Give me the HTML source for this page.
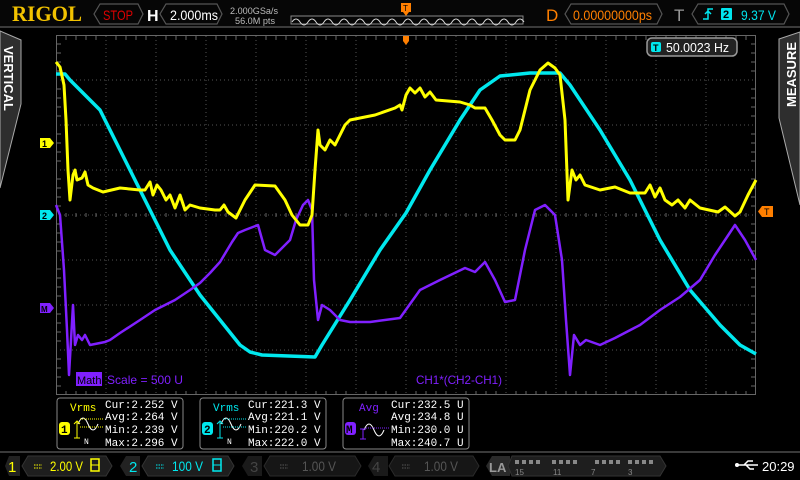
<!DOCTYPE html>
<html><head><meta charset="utf-8"><style>
body{margin:0;background:#000;width:800px;height:480px;overflow:hidden;font-family:"Liberation Sans",sans-serif}
</style></head><body>
<svg width="800" height="480" xmlns="http://www.w3.org/2000/svg" style="position:absolute;left:0;top:0">
<rect width="800" height="480" fill="#000"/>
<!-- header -->
<rect x="0" y="0" width="800" height="26" fill="#060606"/>
<line x1="0" y1="27" x2="800" y2="27" stroke="#3a3a3a" stroke-width="2"/>
<text x="12" y="21" font-family="Liberation Serif" font-weight="bold" font-size="22" fill="#f2c200" textLength="70" lengthAdjust="spacingAndGlyphs">RIGOL</text>
<path d="M100,4 H138 L143,14 L138,24 H100 L94,14 Z" fill="none" stroke="#555" stroke-width="1.2"/>
<text x="103" y="20" font-size="14" fill="#e00000" textLength="30" lengthAdjust="spacingAndGlyphs">STOP</text>
<text x="147" y="21" font-size="16" font-weight="bold" fill="#fff">H</text>
<path d="M166,4 H217 L222,14 L217,24 H166 L160,14 Z" fill="none" stroke="#555" stroke-width="1.2"/>
<text x="170" y="20" font-size="14" fill="#fff" textLength="48" lengthAdjust="spacingAndGlyphs">2.000ms</text>
<text x="230" y="14" font-size="9.5" fill="#bbb" textLength="48" lengthAdjust="spacingAndGlyphs">2.000GSa/s</text>
<text x="235" y="24" font-size="9.5" fill="#bbb" textLength="40" lengthAdjust="spacingAndGlyphs">56.0M pts</text>
<rect x="291" y="16" width="232" height="8" fill="none" stroke="#888"/>
<path d="M292,22 q4,-6 8,0 t8,0 t8,0 t8,0 t8,0 t8,0 t8,0 t8,0 t8,0 t8,0 t8,0 t8,0 t8,0 t8,0 t8,0 t8,0 t8,0 t8,0 t8,0 t8,0 t8,0 t8,0 t8,0 t8,0 t8,0 t8,0 t8,0 t8,0 t8,0" fill="none" stroke="#ddd" stroke-width="1"/>
<rect x="401" y="3" width="10" height="9" fill="#ff7f00"/><path d="M403,12 L406,16 L409,12Z" fill="#ff7f00"/>
<text x="403" y="11" font-size="8" fill="#000">T</text>
<text x="546" y="21" font-size="17" fill="#ff7f00">D</text>
<path d="M571,4 H657 L662,14 L657,24 H571 L565,14 Z" fill="none" stroke="#555" stroke-width="1.2"/>
<text x="573" y="20" font-size="14" fill="#ff7f00" textLength="79" lengthAdjust="spacingAndGlyphs">0.00000000ps</text>
<text x="674" y="21" font-size="17" fill="#999">T</text>
<path d="M698,4 H784 L789,14 L784,24 H698 L692,14 Z" fill="none" stroke="#555" stroke-width="1.2"/>
<path d="M703,19 H708 V9 H713 M705,14 L708,11 L711,14" fill="none" stroke="#00e5ee" stroke-width="1.5"/>
<rect x="721" y="8" width="11" height="12" fill="#00e5ee" rx="1"/>
<text x="723" y="18" font-size="11" font-weight="bold" fill="#000">2</text>
<text x="741" y="20" font-size="14" fill="#00e5ee" textLength="35" lengthAdjust="spacingAndGlyphs">9.37 V</text>
<!-- side panels -->
<path d="M0,31 L21,40 V104 L0,188 Z" fill="#2e2e2e" stroke="#aaa" stroke-width="1"/>
<text transform="translate(4,46) rotate(90)" font-size="13" font-weight="bold" fill="#fff">VERTICAL</text>
<path d="M800,32 L779,39 V118 L800,205 Z" fill="#2e2e2e" stroke="#aaa" stroke-width="1"/>
<text transform="translate(796,107) rotate(-90)" font-size="13" font-weight="bold" fill="#fff">MEASURE</text>
<!-- grid -->
<g stroke="#555" stroke-width="1" stroke-dasharray="1,3">
<line x1="106" y1="36" x2="106" y2="395"/><line x1="156" y1="36" x2="156" y2="395"/><line x1="206" y1="36" x2="206" y2="395"/><line x1="256" y1="36" x2="256" y2="395"/><line x1="306" y1="36" x2="306" y2="395"/><line x1="356" y1="36" x2="356" y2="395"/><line x1="456" y1="36" x2="456" y2="395"/><line x1="506" y1="36" x2="506" y2="395"/><line x1="556" y1="36" x2="556" y2="395"/><line x1="606" y1="36" x2="606" y2="395"/><line x1="656" y1="36" x2="656" y2="395"/><line x1="706" y1="36" x2="706" y2="395"/>
<line x1="56" y1="80" x2="756" y2="80"/><line x1="56" y1="125" x2="756" y2="125"/><line x1="56" y1="170" x2="756" y2="170"/><line x1="56" y1="260" x2="756" y2="260"/><line x1="56" y1="305" x2="756" y2="305"/><line x1="56" y1="350" x2="756" y2="350"/>
<line x1="406" y1="36" x2="406" y2="395"/><line x1="56" y1="215" x2="756" y2="215"/>
</g>
<g stroke="#666" stroke-width="1" fill="none">
<rect x="56.5" y="35.5" width="699" height="359"/>
<path d="M56,44h5M56,53h5M56,62h5M56,71h5M56,89h5M56,98h5M56,107h5M56,116h5M56,134h5M56,143h5M56,152h5M56,161h5M56,179h5M56,188h5M56,197h5M56,206h5M56,224h5M56,233h5M56,242h5M56,251h5M56,269h5M56,278h5M56,287h5M56,296h5M56,314h5M56,323h5M56,332h5M56,341h5M56,359h5M56,368h5M56,377h5M56,386h5"/>
<path d="M756,44h-5M756,53h-5M756,62h-5M756,71h-5M756,89h-5M756,98h-5M756,107h-5M756,116h-5M756,134h-5M756,143h-5M756,152h-5M756,161h-5M756,179h-5M756,188h-5M756,197h-5M756,206h-5M756,224h-5M756,233h-5M756,242h-5M756,251h-5M756,269h-5M756,278h-5M756,287h-5M756,296h-5M756,314h-5M756,323h-5M756,332h-5M756,341h-5M756,359h-5M756,368h-5M756,377h-5M756,386h-5"/>
<path d="M66,36v4M76,36v4M86,36v4M96,36v4M116,36v4M126,36v4M136,36v4M146,36v4M166,36v4M176,36v4M186,36v4M196,36v4M216,36v4M226,36v4M236,36v4M246,36v4M266,36v4M276,36v4M286,36v4M296,36v4M316,36v4M326,36v4M336,36v4M346,36v4M366,36v4M376,36v4M386,36v4M396,36v4M416,36v4M426,36v4M436,36v4M446,36v4M466,36v4M476,36v4M486,36v4M496,36v4M516,36v4M526,36v4M536,36v4M546,36v4M566,36v4M576,36v4M586,36v4M596,36v4M616,36v4M626,36v4M636,36v4M646,36v4M666,36v4M676,36v4M686,36v4M696,36v4M716,36v4M726,36v4M736,36v4M746,36v4"/>
<path d="M66,395v-4M76,395v-4M86,395v-4M96,395v-4M116,395v-4M126,395v-4M136,395v-4M146,395v-4M166,395v-4M176,395v-4M186,395v-4M196,395v-4M216,395v-4M226,395v-4M236,395v-4M246,395v-4M266,395v-4M276,395v-4M286,395v-4M296,395v-4M316,395v-4M326,395v-4M336,395v-4M346,395v-4M366,395v-4M376,395v-4M386,395v-4M396,395v-4M416,395v-4M426,395v-4M436,395v-4M446,395v-4M466,395v-4M476,395v-4M486,395v-4M496,395v-4M516,395v-4M526,395v-4M536,395v-4M546,395v-4M566,395v-4M576,395v-4M586,395v-4M596,395v-4M616,395v-4M626,395v-4M636,395v-4M646,395v-4M666,395v-4M676,395v-4M686,395v-4M696,395v-4M716,395v-4M726,395v-4M736,395v-4M746,395v-4"/>
<path d="M66,213v4M76,213v4M86,213v4M96,213v4M116,213v4M126,213v4M136,213v4M146,213v4M166,213v4M176,213v4M186,213v4M196,213v4M216,213v4M226,213v4M236,213v4M246,213v4M266,213v4M276,213v4M286,213v4M296,213v4M316,213v4M326,213v4M336,213v4M346,213v4M366,213v4M376,213v4M386,213v4M396,213v4M416,213v4M426,213v4M436,213v4M446,213v4M466,213v4M476,213v4M486,213v4M496,213v4M516,213v4M526,213v4M536,213v4M546,213v4M566,213v4M576,213v4M586,213v4M596,213v4M616,213v4M626,213v4M636,213v4M646,213v4M666,213v4M676,213v4M686,213v4M696,213v4M716,213v4M726,213v4M736,213v4M746,213v4"/>
</g>
<!-- traces -->
<polyline fill="none" stroke="#00e8ee" stroke-width="3.5" stroke-linejoin="round" points="56,74 65,74 70,80 90,100 100,110 120,150 145,200 170,250 200,295 220,320 240,345 250,352 262,355 315,357 322,345 350,300 380,250 406,213 430,170 460,120 480,90 500,76 530,73 560,73 570,85 600,130 630,180 660,240 690,290 720,325 740,345 756,354"/>
<polyline fill="none" stroke="#8020ff" stroke-width="2.5" stroke-linejoin="round" points="56,205 60,215 64,270 67,330 69,375 71,340 73,305 75,345 78,335 82,340 85,335 90,345 105,342 110,340 120,333 140,320 155,310 175,300 190,290 200,283 210,273 220,262 232,242 238,233 245,230 258,225 265,250 275,255 280,250 290,240 296,220 303,205 308,200 312,210 314,280 318,320 322,305 330,310 340,320 350,322 370,322 400,318 420,290 440,280 465,268 475,272 485,262 495,280 505,302 515,300 525,250 535,210 545,205 555,215 562,260 566,320 570,375 574,335 580,345 586,340 600,345 615,338 640,325 660,310 680,297 700,280 715,255 725,240 735,225 745,240 756,260"/>
<polyline fill="none" stroke="#ffff00" stroke-width="3" stroke-linejoin="round" points="56,62 60,67 64,85 66,120 68,170 70,200 73,175 75,170 77,180 82,178 85,172 88,185 93,188 103,192 120,188 140,190 145,190 150,182 153,195 157,185 161,190 166,200 170,195 175,208 180,195 185,210 190,205 200,208 215,210 220,210 224,205 228,212 236,218 245,200 255,185 275,186 285,200 292,215 300,225 308,225 312,215 315,170 318,130 320,145 325,150 330,140 335,145 345,125 350,120 360,118 375,115 395,108 400,105 402,110 406,95 410,88 415,93 420,88 425,97 430,92 436,100 460,102 470,105 475,108 485,108 492,120 500,135 505,140 515,140 520,130 530,90 540,70 548,63 555,68 560,75 565,120 568,200 572,170 576,180 580,175 585,185 600,190 615,187 630,193 645,193 650,185 655,197 660,188 665,200 672,205 678,200 685,208 690,200 700,208 718,212 725,207 735,216 740,212 748,195 756,180"/>
<!-- markers -->
<path d="M40,138 H50 L54,143 L50,148 H40Z" fill="#ffff00"/><text x="42" y="147" font-size="9" font-weight="bold" fill="#000">1</text>
<path d="M40,210 H50 L54,215 L50,220 H40Z" fill="#00e8ee"/><text x="42" y="219" font-size="9" font-weight="bold" fill="#000">2</text>
<path d="M40,303 H50 L54,308 L50,313 H40Z" fill="#8020ff"/><text x="41" y="312" font-size="8" font-weight="bold" fill="#000">M</text>
<path d="M403,36 H409 V41 L406,45 L403,41Z" fill="#ff7f00"/>
<path d="M762,206 H773 V217 H762 L758,211.5Z" fill="#ff7f00"/><text x="764" y="215" font-size="9" fill="#000">T</text>
<!-- freq box -->
<rect x="647" y="38" width="90" height="18" rx="5" fill="#222" stroke="#999" stroke-width="1.5"/>
<rect x="651" y="42" width="10" height="10" rx="2" fill="#00e8ee"/><text x="653" y="51" font-size="9" font-weight="bold" fill="#000">T</text>
<text x="666" y="52" font-size="13" fill="#fff" textLength="63" lengthAdjust="spacingAndGlyphs">50.0023 Hz</text>
<!-- math label -->
<rect x="76" y="372" width="26" height="14" fill="#8020ff"/>
<text x="77" y="384" font-size="11" fill="#000">Math</text>
<text x="107" y="384" font-size="12" fill="#8020ff" textLength="76" lengthAdjust="spacingAndGlyphs">Scale = 500 U</text>
<text x="416" y="384" font-size="12" fill="#8020ff" textLength="86" lengthAdjust="spacingAndGlyphs">CH1*(CH2-CH1)</text>
<!-- measure boxes -->
<g font-family="Liberation Mono" font-size="11">
<rect x="57" y="398" width="126" height="51" rx="3" fill="#000" stroke="#888"/>
<text x="70" y="411" fill="#ffff00">Vrms</text>
<text x="105" y="408" fill="#fff">Cur:2.252 V</text><text x="105" y="420" fill="#fff">Avg:2.264 V</text><text x="105" y="433" fill="#fff">Min:2.239 V</text><text x="105" y="446" fill="#fff">Max:2.296 V</text>
<rect x="59" y="422" width="11" height="13" rx="3" fill="#ffff00"/><text x="61" y="433" fill="#000" font-weight="bold">1</text>
<path d="M78,424 q5,-12 10,0 t10,0" fill="none" stroke="#fff"/><path d="M77,422 V438 M74,438h6 M74,424 l3,-3 3,3" stroke="#ffff00" fill="none"/><text x="84" y="444" fill="#fff" font-size="8">N</text>
<path d="M80,419h24M80,427h24" stroke="#ffff00" stroke-dasharray="1,1"/>
<rect x="200" y="398" width="126" height="51" rx="3" fill="#000" stroke="#888"/>
<text x="213" y="411" fill="#00e8ee">Vrms</text>
<text x="248" y="408" fill="#fff">Cur:221.3 V</text><text x="248" y="420" fill="#fff">Avg:221.1 V</text><text x="248" y="433" fill="#fff">Min:220.2 V</text><text x="248" y="446" fill="#fff">Max:222.0 V</text>
<rect x="202" y="422" width="11" height="13" rx="3" fill="#00e8ee"/><text x="204" y="433" fill="#000" font-weight="bold">2</text>
<path d="M221,424 q5,-12 10,0 t10,0" fill="none" stroke="#fff"/><path d="M220,422 V438 M217,438h6 M217,424 l3,-3 3,3" stroke="#00e8ee" fill="none"/><text x="227" y="444" fill="#fff" font-size="8">N</text>
<path d="M223,419h24M223,427h24" stroke="#00e8ee" stroke-dasharray="1,1"/>
<rect x="343" y="398" width="126" height="51" rx="3" fill="#000" stroke="#888"/>
<text x="359" y="411" fill="#8020ff">Avg</text>
<text x="391" y="408" fill="#fff">Cur:232.5 U</text><text x="391" y="420" fill="#fff">Avg:234.8 U</text><text x="391" y="433" fill="#fff">Min:230.0 U</text><text x="391" y="446" fill="#fff">Max:240.7 U</text>
<rect x="345" y="422" width="11" height="13" rx="3" fill="#8020ff"/><text x="346" y="433" fill="#000" font-weight="bold">M</text>
<path d="M364,430 q5,-12 10,0 t10,0" fill="none" stroke="#fff"/><path d="M363,429 V439 M360,439h6 M360,429h6" stroke="#8020ff" fill="none"/>
<path d="M366,428h24" stroke="#8020ff" stroke-dasharray="1,1"/>
</g>
<!-- bottom bar -->
<line x1="0" y1="452" x2="800" y2="452" stroke="#3a3a3a" stroke-width="2"/>
<g font-size="14">
<path d="M5,466 L9,456 H20 V476 H9Z" fill="#222"/><text x="8" y="472" fill="#ffff00" font-size="15">1</text>
<path d="M28,456 H106 L112,466 L106,476 H28 L22,466Z" fill="#1e1e1e" stroke="#333"/>
<path d="M34,465h8M34,468h8" stroke="#ffff00" stroke-dasharray="1.5,1"/><text x="50" y="471" fill="#ffff00" textLength="33" lengthAdjust="spacingAndGlyphs">2.00 V</text>
<rect x="91" y="459" width="8" height="12" fill="none" stroke="#ffff00" stroke-width="1.5"/><line x1="91" y1="465" x2="99" y2="465" stroke="#ffff00"/>
<path d="M120,466 L126,456 H140 V476 H126Z" fill="#222"/><text x="129" y="472" fill="#00e8ee" font-size="15">2</text>
<path d="M148,456 H228 L234,466 L228,476 H148 L142,466Z" fill="#1e1e1e" stroke="#333"/>
<path d="M156,465h8M156,468h8" stroke="#00e8ee" stroke-dasharray="1.5,1"/><text x="172" y="471" fill="#00e8ee" textLength="31" lengthAdjust="spacingAndGlyphs">100 V</text>
<rect x="213" y="459" width="8" height="12" fill="none" stroke="#00e8ee" stroke-width="1.5"/><line x1="213" y1="465" x2="221" y2="465" stroke="#00e8ee"/>
<path d="M242,466 L248,456 H262 V476 H248Z" fill="#1a1a1a"/><text x="250" y="472" fill="#444" font-size="15">3</text>
<path d="M270,456 H355 L361,466 L355,476 H270 L264,466Z" fill="#161616" stroke="#2a2a2a"/>
<path d="M280,465h8M280,468h8" stroke="#555" stroke-dasharray="1.5,1"/><text x="302" y="471" fill="#555" textLength="34" lengthAdjust="spacingAndGlyphs">1.00 V</text>
<path d="M368,466 L374,456 H388 V476 H374Z" fill="#1a1a1a"/><text x="372" y="472" fill="#444" font-size="15">4</text>
<path d="M395,456 H473 L479,466 L473,476 H395 L389,466Z" fill="#161616" stroke="#2a2a2a"/>
<path d="M402,465h8M402,468h8" stroke="#555" stroke-dasharray="1.5,1"/><text x="424" y="471" fill="#555" textLength="34" lengthAdjust="spacingAndGlyphs">1.00 V</text>
<path d="M486,466 L492,456 H510 V476 H492Z" fill="#2a2a2a"/><text x="489" y="472" fill="#999" font-weight="bold" font-size="13">LA</text>
<path d="M512,456 H660 L666,466 L660,476 H512 L508,466Z" fill="#1e1e1e" stroke="#333"/>
<g fill="#888"><rect x="515" y="460" width="4" height="4"/><rect x="522" y="460" width="4" height="4"/><rect x="529" y="460" width="4" height="4"/><rect x="536" y="460" width="4" height="4"/><rect x="552" y="460" width="4" height="4"/><rect x="559" y="460" width="4" height="4"/><rect x="566" y="460" width="4" height="4"/><rect x="573" y="460" width="4" height="4"/><rect x="595" y="460" width="4" height="4"/><rect x="602" y="460" width="4" height="4"/><rect x="609" y="460" width="4" height="4"/><rect x="616" y="460" width="4" height="4"/><rect x="628" y="460" width="4" height="4"/><rect x="635" y="460" width="4" height="4"/><rect x="642" y="460" width="4" height="4"/><rect x="649" y="460" width="4" height="4"/></g>
<g fill="#888" font-size="8"><text x="515" y="475">15</text><text x="553" y="475">11</text><text x="591" y="475">7</text><text x="628" y="475">3</text></g>
<path d="M737,465 H758 M744,465 l4,-4 h5 M746,465 l4,4 h4" stroke="#fff" stroke-width="1.5" fill="none"/><circle cx="737" cy="465" r="2" fill="#fff"/>
<text x="762" y="471" fill="#fff" font-size="13">20:29</text>
</g>
</svg>
</body></html>
